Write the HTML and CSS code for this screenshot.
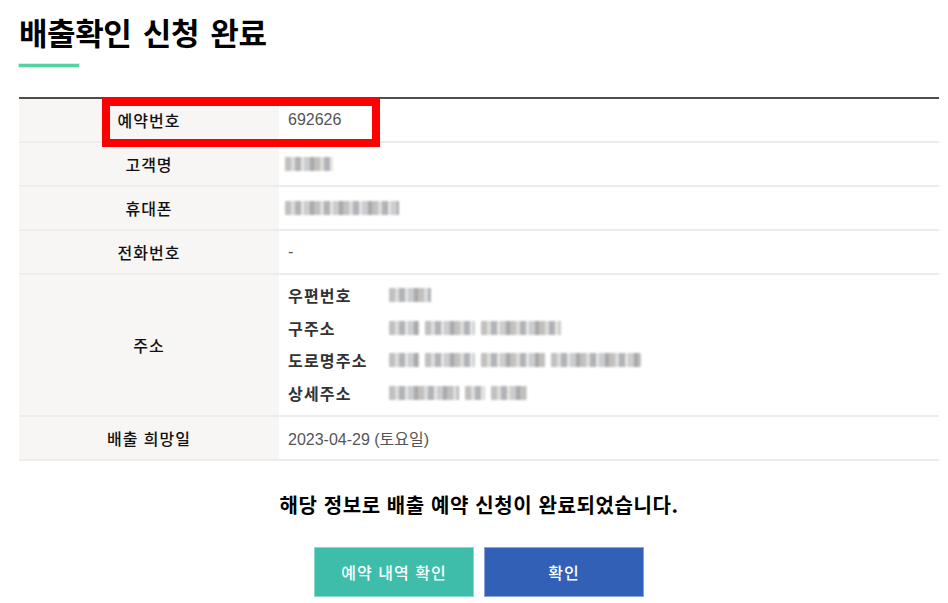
FILE: index.html
```html
<!DOCTYPE html>
<html lang="ko">
<head>
<meta charset="utf-8">
<title>배출확인 신청 완료</title>
<link rel="stylesheet" href="styles.css">
</head>
<body>
<div class="page">
  <h1 class="title">배출확인 신청 완료</h1>
  <div class="title-bar"></div>

  <div class="info">
    <div class="row">
      <div class="th">예약번호</div>
      <div class="td">692626</div>
    </div>
    <div class="row">
      <div class="th">고객명</div>
      <div class="td"><span class="blur b-name"></span></div>
    </div>
    <div class="row">
      <div class="th">휴대폰</div>
      <div class="td"><span class="blur b-phone"></span></div>
    </div>
    <div class="row">
      <div class="th">전화번호</div>
      <div class="td">-</div>
    </div>
    <div class="row row-addr">
      <div class="th">주소</div>
      <div class="td addr">
        <div class="addr-line"><span class="sub">우편번호</span><span class="blur b-zip"></span></div>
        <div class="addr-line"><span class="sub">구주소</span><span class="blur b-w1"></span><span class="blur b-w2"></span><span class="blur b-w3"></span></div>
        <div class="addr-line"><span class="sub">도로명주소</span><span class="blur b-w1"></span><span class="blur b-w2"></span><span class="blur b-w4"></span><span class="blur b-w5"></span></div>
        <div class="addr-line"><span class="sub">상세주소</span><span class="blur b-w6"></span><span class="blur b-w7"></span><span class="blur b-w8"></span></div>
      </div>
    </div>
    <div class="row">
      <div class="th">배출 희망일</div>
      <div class="td">2023-04-29 (토요일)</div>
    </div>

    <div class="highlight"></div>
  </div>

  <p class="message">해당 정보로 배출 예약 신청이 완료되었습니다.</p>

  <div class="buttons">
    <button class="btn btn-teal" type="button">예약 내역 확인</button>
    <button class="btn btn-blue" type="button">확인</button>
  </div>
</div>
</body>
</html>
```

FILE: styles.css
```css
html, body {
  margin: 0;
  padding: 0;
  background: #ffffff;
}

body {
  font-family: "Liberation Sans", "Noto Sans CJK KR", sans-serif;
  color: #111111;
}

.page {
  width: 920px;
  padding: 0 9px 0 19px;
}

.title {
  margin: 0;
  padding-top: 12px;
  font-family: "Noto Sans CJK KR", sans-serif;
  font-size: 31px;
  line-height: 40px;
  font-weight: 700;
  color: #000000;
  letter-spacing: -0.4px;
  word-spacing: 3px;
}

.title-bar {
  margin-top: 12px;
  width: 60px;
  height: 3px;
  background: #55d3a2;
  box-shadow: 0 0 0 0.5px #9ee5c8;
}

.info {
  position: relative;
  margin-top: 30px;
  border-top: 2px solid #4d4d4d;
}

.row {
  display: grid;
  grid-template-columns: 260px 1fr;
  min-height: 42px;
  border-bottom: 2px solid #ececec;
}

.th {
  background: #f7f6f4;
  display: flex;
  align-items: center;
  justify-content: center;
  font-family: "Noto Sans CJK KR", sans-serif;
  font-size: 16px;
  letter-spacing: 1px;
  font-weight: 500;
  color: #111111;
}

.td {
  display: flex;
  align-items: center;
  padding-left: 9px;
  font-size: 16px;
  color: #555555;
  white-space: pre;
}

.addr {
  flex-direction: column;
  align-items: stretch;
  justify-content: flex-start;
  padding-top: 4px;
  padding-bottom: 6px;
}

.addr-line {
  display: flex;
  align-items: center;
  height: 32.5px;
}

.sub {
  width: 101px;
  flex: none;
  font-family: "Noto Sans CJK KR", sans-serif;
  font-size: 16px;
  letter-spacing: 1.2px;
  font-weight: 700;
  color: #333333;
}

.blur {
  display: inline-block;
  height: 14px;
  margin-right: 6px;
  background:
    repeating-linear-gradient(90deg,
      #b7b5b4 0 6px,
      #d9d7d6 6px 10px,
      #a3a6ab 10px 16px,
      #e4e2e1 16px 19px,
      #c2c4c8 19px 25px,
      #9c9a99 25px 29px);
  filter: blur(1.3px);
  opacity: 0.85;
}

.td > .blur {
  margin-left: -3px;
}

.b-name  { width: 48px; }
.b-phone { width: 114px; }
.b-zip   { width: 42px; }
.b-w1    { width: 30px; }
.b-w2    { width: 50px; }
.b-w3    { width: 80px; }
.b-w4    { width: 64px; }
.b-w5    { width: 90px; }
.b-w6    { width: 70px; }
.b-w7    { width: 20px; }
.b-w8    { width: 36px; }

.highlight {
  position: absolute;
  left: 83px;
  top: -1px;
  width: 262px;
  height: 33px;
  border: 8px solid #ff0000;
  pointer-events: none;
}

.message {
  margin: 32px 0 0;
  text-align: center;
  font-family: "Noto Sans CJK KR", sans-serif;
  font-size: 20px;
  letter-spacing: 0.6px;
  line-height: 24px;
  font-weight: 700;
  color: #000000;
}

.buttons {
  display: flex;
  justify-content: center;
  gap: 10px;
  margin-top: 30px;
}

.btn {
  width: 160px;
  height: 50px;
  margin: 0;
  padding: 0;
  font-family: "Noto Sans CJK KR", sans-serif;
  font-size: 16px;
  letter-spacing: 1px;
  font-weight: 500;
  color: #ffffff;
  cursor: pointer;
}

.btn-teal {
  background: #3ebdab;
  border: 1px solid #86d8cb;
}

.btn-blue {
  background: #3360b7;
  border: 1px solid #8aa3d8;
}
```
